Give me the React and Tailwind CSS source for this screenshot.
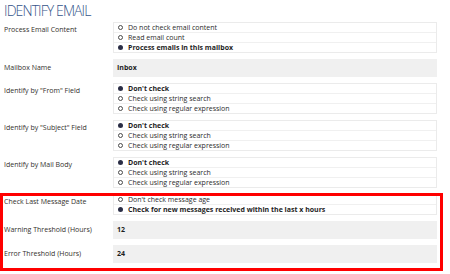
import React from 'react';

const radioGroups = {
    content: ['Do not check email content', 'Read email count', 'Process emails in this mailbox'],
    from: ["Don't check", 'Check using string search', 'Check using regular expression'],
    age: ["Don't check message age", 'Check for new messages received within the last x hours'],
};

const Radio = ({ checked }) =>
    checked ? (
        <span className="w-[5px] h-[5px] rounded-full bg-[#2a2d45] shrink-0" />
    ) : (
        <span className="w-[5px] h-[5px] rounded-full border border-[#4a4a4a] shrink-0" />
    );

const RadioGroup = ({ options, selected }) => (
    <div className="border border-[#ebebeb] bg-white">
        {options.map((opt, i) => (
            <div
                key={opt}
                className={
                    i < options.length - 1
                        ? 'h-[10px] flex items-center gap-[5px] pl-[4px] border-b border-[#f0f0f0]'
                        : 'h-[9px] flex items-center gap-[5px] pl-[4px]'
                }
            >
                <Radio checked={i === selected} />
                <span
                    className={
                        i === selected
                            ? 'text-[7px] leading-[9px] font-bold text-[#1e1e1e]'
                            : 'text-[7px] leading-[9px] text-[#2b2b2b]'
                    }
                >
                    {opt}
                </span>
            </div>
        ))}
    </div>
);

const Field = ({ label, input, children }) => (
    <div className="flex">
        <div
            className={
                input
                    ? 'w-[113px] shrink-0 pl-[4px] pt-[4px] text-[7px] leading-[10px] text-[#33302c]'
                    : 'w-[113px] shrink-0 pl-[4px] pt-[3px] text-[7px] leading-[10px] text-[#33302c]'
            }
        >
            {label}
        </div>
        <div className="w-[324px]">{children}</div>
    </div>
);

const TextInput = ({ value }) => (
    <div className="h-[18px] bg-[#f0f0f0] flex items-center pl-[4px] text-[7px] font-bold text-[#1e1e1e]">
        {value}
    </div>
);

export default function App() {
    return (
        <div className="relative w-[450px] h-[274px] bg-white overflow-hidden font-['Open_Sans',sans-serif]">
            <h1 className="h-[22px] pl-[4px] pt-[2px] text-[14px] leading-[17px] font-light tracking-[-0.9px] text-[#35558a]">
                IDENTIFY EMAIL
            </h1>
            <div className="flex flex-col gap-[6px]">
                <Field label="Process Email Content">
                    <RadioGroup options={radioGroups.content} selected={2} />
                </Field>
                <Field label="Mailbox Name" input>
                    <TextInput value="Inbox" />
                </Field>
                <Field label={'Identify by "From" Field'}>
                    <RadioGroup options={radioGroups.from} selected={0} />
                </Field>
                <Field label={'Identify by "Subject" Field'}>
                    <RadioGroup options={radioGroups.from} selected={0} />
                </Field>
                <Field label="Identify by Mail Body">
                    <RadioGroup options={radioGroups.from} selected={0} />
                </Field>
                <Field label="Check Last Message Date">
                    <RadioGroup options={radioGroups.age} selected={1} />
                </Field>
                <Field label="Warning Threshold (Hours)" input>
                    <TextInput value="12" />
                </Field>
                <Field label="Error Threshold (Hours)" input>
                    <TextInput value="24" />
                </Field>
            </div>
            {/* highlight around the message-age settings */}
            <div className="absolute left-0 top-[193px] w-[443px] h-[78px] border-[3px] border-[#ff0000]" />
        </div>
    );
}
